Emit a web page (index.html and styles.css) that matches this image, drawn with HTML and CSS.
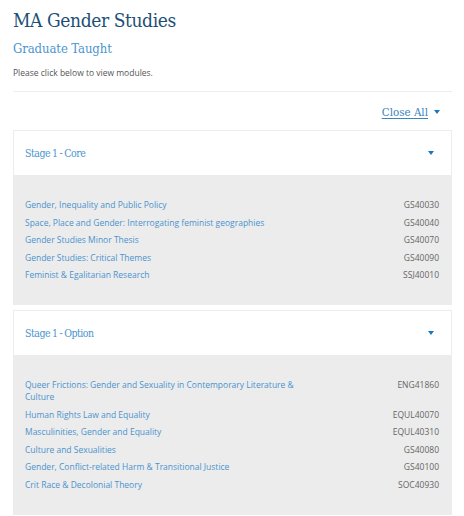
FILE: index.html
```html
<!DOCTYPE html>
<html>
<head>
<meta charset="utf-8">
<link rel="stylesheet" href="styles.css">
</head>
<body>
<div class="page">
  <h1 class="title">MA Gender Studies</h1>
  <h2 class="subtitle">Graduate Taught</h2>
  <p class="intro">Please click below to view modules.</p>
  <div class="toolbar">
    <a class="close-all" href="#">Close All</a><span class="caret"></span>
  </div>
  <div class="panel">
    <div class="panel-head"><span class="panel-title">Stage 1 - Core</span><span class="caret"></span></div>
    <div class="panel-body">
      <div class="row"><a href="#">Gender, Inequality and Public Policy</a><span class="code">GS40030</span></div>
      <div class="row"><a href="#">Space, Place and Gender: Interrogating feminist geographies</a><span class="code">GS40040</span></div>
      <div class="row"><a href="#">Gender Studies Minor Thesis</a><span class="code">GS40070</span></div>
      <div class="row"><a href="#">Gender Studies: Critical Themes</a><span class="code">GS40090</span></div>
      <div class="row"><a href="#">Feminist &amp; Egalitarian Research</a><span class="code">SSJ40010</span></div>
    </div>
  </div>
  <div class="panel">
    <div class="panel-head"><span class="panel-title">Stage 1 - Option</span><span class="caret"></span></div>
    <div class="panel-body">
      <div class="row"><a class="wrap" href="#">Queer Frictions: Gender and Sexuality in Contemporary Literature &amp; Culture</a><span class="code">ENG41860</span></div>
      <div class="row"><a href="#">Human Rights Law and Equality</a><span class="code">EQUL40070</span></div>
      <div class="row"><a href="#">Masculinities, Gender and Equality</a><span class="code">EQUL40310</span></div>
      <div class="row"><a href="#">Culture and Sexualities</a><span class="code">GS40080</span></div>
      <div class="row"><a href="#">Gender, Conflict-related Harm &amp; Transitional Justice</a><span class="code">GS40100</span></div>
      <div class="row"><a href="#">Crit Race &amp; Decolonial Theory</a><span class="code">SOC40930</span></div>
    </div>
  </div>
</div>
</body>
</html>
```

FILE: styles.css
```css
html, body { margin: 0; padding: 0; background: #fff; }
body { font-family: "Open Sans", "DejaVu Sans", sans-serif; }
.page { padding: 8px 12px 0 13px; }
.title {
  font-family: "DejaVu Serif Condensed", "DejaVu Serif", serif;
  font-weight: normal;
  font-size: 19px;
  color: #1d4f76;
  margin: 0;
  line-height: 24px;
  letter-spacing: -0.4px;
}
.subtitle {
  font-family: "DejaVu Serif Condensed", "DejaVu Serif", serif;
  font-weight: normal;
  font-size: 13px;
  color: #4b95cf;
  margin: 8px 0 0;
  line-height: 18px;
  letter-spacing: -0.1px;
}
.intro {
  font-size: 8.5px;
  color: #555;
  margin: 9px 0 0;
  line-height: 12px;
}
.toolbar {
  border-top: 1px solid #eee;
  margin-top: 12px;
  display: flex;
  justify-content: flex-end;
  align-items: center;
  padding: 12px 12px 10px 0;
}
.close-all {
  font-family: "DejaVu Serif Condensed", "DejaVu Serif", serif;
  font-size: 11.5px;
  color: #3a84c0;
  text-decoration: underline;
  text-underline-offset: 2px;
  line-height: 16px;
}
.caret {
  width: 0; height: 0;
  border-left: 3.5px solid transparent;
  border-right: 3.5px solid transparent;
  border-top: 4px solid #1a78bf;
  margin-left: 6px;
}
.panel {
  border: 1px solid #ededed;
  margin-bottom: 5px;
}
.panel-head {
  display: flex;
  justify-content: space-between;
  align-items: center;
  height: 44px;
  padding: 0 17px 0 11px;
  background: #fff;
}
.panel-title {
  font-family: "DejaVu Serif Condensed", "DejaVu Serif", serif;
  font-size: 10.5px;
  color: #4b95cf;
  letter-spacing: -0.5px;
  word-spacing: -0.5px;
}
.panel-head .caret { margin-left: 0; }
.panel-body {
  background: #ececec;
  padding: 24px 12px 23px 11px;
  display: flex;
  flex-direction: column;
  gap: 5.5px;
}
.row {
  display: flex;
  justify-content: space-between;
  align-items: flex-start;
  font-size: 8.5px;
  line-height: 12px;
}
.row a {
  color: #4b93cc;
  text-decoration: none;
}
.row a.wrap { max-width: 290px; }
.code { color: #666; }
```
